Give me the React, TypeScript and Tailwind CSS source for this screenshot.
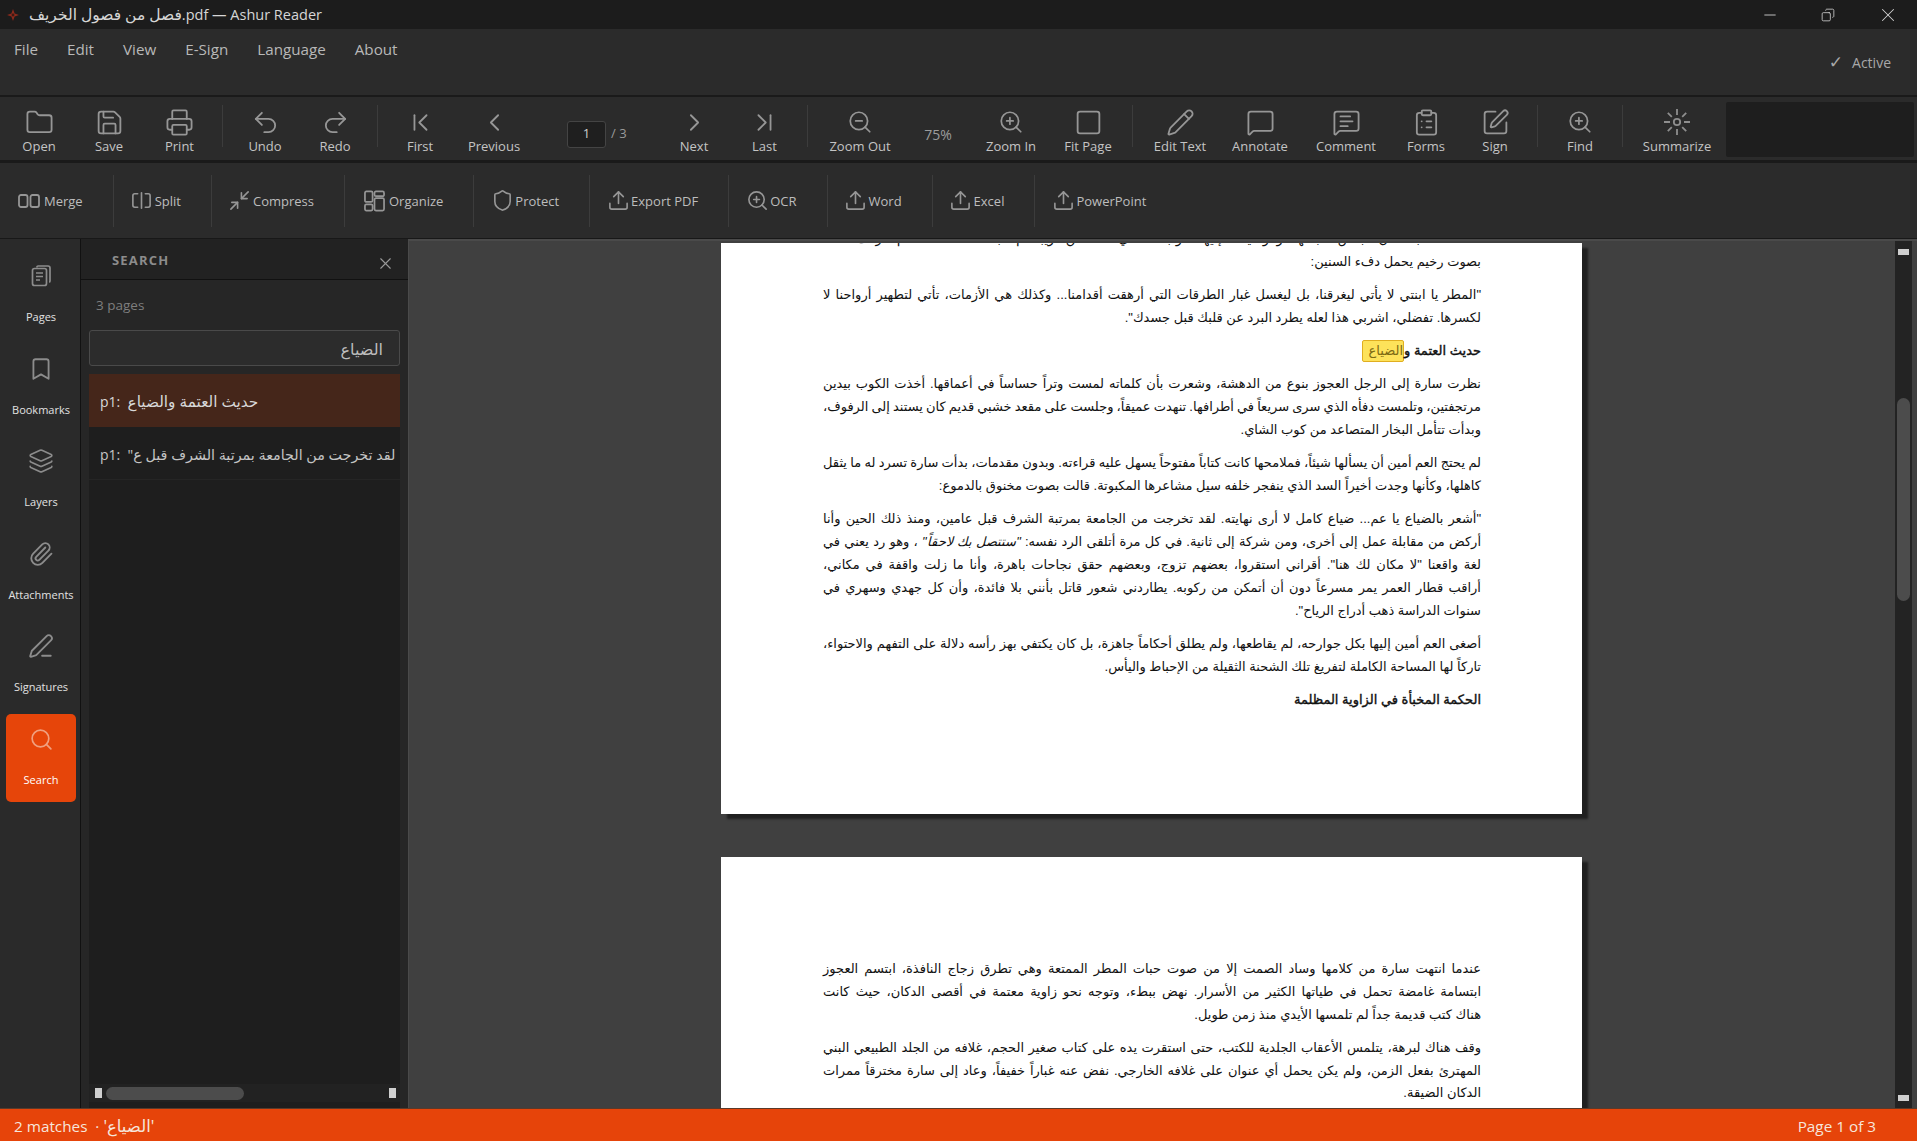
import { Fragment, type ReactNode } from 'react';
import {
  Bookmark, ChevronFirst, ChevronLast, ChevronLeft, ChevronRight, ClipboardList, Folder, Layers,
  MessageSquare, MessageSquareText, Minimize2, Minus, Paperclip, Pencil, PenLine, Printer, Redo2, Save,
  Search, Shield, Square, SquarePen, SquareSplitHorizontal, Undo2, Upload, X, ZoomIn, ZoomOut,
  Copy,
} from 'lucide-react';

const ui = 'font-["Open_Sans","DejaVu_Sans",sans-serif]';
const ic = 'h-[29px] w-[29px] text-[#969696]';
const icz = 'h-[26px] w-[26px] text-[#969696]';

function SummarizeIcon() {
  return (
    <svg viewBox="0 0 28 28" className="h-[28px] w-[28px] text-[#8e8e8e]" fill="none" stroke="currentColor" strokeWidth="1.8">
      <circle cx="14" cy="14" r="3.2" />
      <path d="M14 1v6M14 21v6M1 14h6M21 14h6M4.8 4.8l4 4M19.2 19.2l4 4M23.2 4.8l-4 4M8.8 19.2l-4 4" />
    </svg>
  );
}

type Tool = { label: string; w: string; icon: ReactNode } | null;

// main toolbar: null means a separator
const tools: Tool[] = [
  { label: 'Open', w: 'w-[70px]', icon: <Folder className={ic} strokeWidth={1.5} /> },
  { label: 'Save', w: 'w-[70px]', icon: <Save className={ic} strokeWidth={1.5} /> },
  { label: 'Print', w: 'w-[71px]', icon: <Printer className={ic} strokeWidth={1.5} /> },
  null,
  { label: 'Undo', w: 'w-[70px]', icon: <Undo2 className={ic} strokeWidth={1.5} /> },
  { label: 'Redo', w: 'w-[70px]', icon: <Redo2 className={ic} strokeWidth={1.5} /> },
  null,
  { label: 'First', w: 'w-[70px]', icon: <ChevronFirst className={ic} strokeWidth={1.5} /> },
  { label: 'Previous', w: 'w-[78px]', icon: <ChevronLeft className={ic} strokeWidth={1.5} /> },
];

const tools2: Tool[] = [
  { label: 'Next', w: 'w-[70px]', icon: <ChevronRight className={ic} strokeWidth={1.5} /> },
  { label: 'Last', w: 'w-[71px]', icon: <ChevronLast className={ic} strokeWidth={1.5} /> },
  null,
  { label: 'Zoom Out', w: 'w-[90px]', icon: <ZoomOut className={icz} strokeWidth={1.6} /> },
];

const tools3: Tool[] = [
  { label: 'Zoom In', w: 'w-[80px]', icon: <ZoomIn className={icz} strokeWidth={1.6} /> },
  { label: 'Fit Page', w: 'w-[74px]', icon: <Square className={ic} strokeWidth={1.5} /> },
  null,
  { label: 'Edit Text', w: 'w-[80px]', icon: <Pencil className={ic} strokeWidth={1.5} /> },
  { label: 'Annotate', w: 'w-[80px]', icon: <MessageSquare className={ic} strokeWidth={1.5} /> },
  { label: 'Comment', w: 'w-[92px]', icon: <MessageSquareText className={ic} strokeWidth={1.5} /> },
  { label: 'Forms', w: 'w-[68px]', icon: <ClipboardList className={ic} strokeWidth={1.5} /> },
  { label: 'Sign', w: 'w-[70px]', icon: <SquarePen className={ic} strokeWidth={1.5} /> },
  null,
  { label: 'Find', w: 'w-[70px]', icon: <ZoomIn className={icz} strokeWidth={1.6} /> },
  null,
  { label: 'Summarize', w: 'w-[94px]', icon: <SummarizeIcon /> },
];

const Sep = () => <div className="mx-[7px] mb-[5px] h-[42px] w-px shrink-0 self-center bg-[#3c3c3c]" />;

function ToolGroup({ items }: { items: Tool[] }) {
  return (
    <>
      {items.map((t, i) =>
        t ? (
          <div key={i} className={`${t.w} flex shrink-0 flex-col items-center pt-[11px]`}>
            <div className="flex h-[28px] items-center justify-center">{t.icon}</div>
            <span className="mt-[1px] text-[13px] leading-[18px] text-[#c4c4c4]">{t.label}</span>
          </div>
        ) : (
          <Sep key={i} />
        ),
      )}
    </>
  );
}

const small = 'h-[23px] w-[23px] -mx-[2.5px] text-[#969696]';

function MergeIcon() {
  return (
    <svg viewBox="0 0 22 22" className="h-[22px] w-[22px] text-[#969696]" fill="none" stroke="currentColor" strokeWidth="1.8">
      <rect x="1" y="5" width="8.5" height="12" rx="2" />
      <rect x="12.5" y="5" width="8.5" height="12" rx="2" />
    </svg>
  );
}

function OrganizeIcon() {
  return (
    <svg viewBox="0 0 22 22" className="h-[22px] w-[21px] text-[#969696]" fill="none" stroke="currentColor" strokeWidth="1.8">
      <rect x="1" y="1" width="8" height="11" rx="1.5" />
      <rect x="1" y="14.5" width="8" height="6.5" rx="1.5" />
      <rect x="11" y="1" width="10" height="5" rx="1.5" />
      <rect x="11" y="8" width="10" height="13" rx="1.5" />
    </svg>
  );
}

const actions = [
  { label: 'Merge', icon: <MergeIcon /> },
  { label: 'Split', icon: <SquareSplitHorizontal className={small} strokeWidth={1.7} /> },
  { label: 'Compress', icon: <Minimize2 className={small} strokeWidth={1.7} /> },
  { label: 'Organize', icon: <OrganizeIcon /> },
  { label: 'Protect', icon: <Shield className={small} strokeWidth={1.7} /> },
  { label: 'Export PDF', icon: <Upload className={small} strokeWidth={1.7} /> },
  { label: 'OCR', icon: <ZoomIn className={small} strokeWidth={1.7} /> },
  { label: 'Word', icon: <Upload className={small} strokeWidth={1.7} /> },
  { label: 'Excel', icon: <Upload className={small} strokeWidth={1.7} /> },
  { label: 'PowerPoint', icon: <Upload className={small} strokeWidth={1.7} /> },
];

function PagesIcon() {
  return (
    <svg viewBox="0 0 20 22" className="h-[22px] w-[20px] text-[#8c8c8c]" fill="none" stroke="currentColor" strokeWidth="1.7">
      <path d="M6 2.5V2a1 1 0 0 1 1-1h10a2 2 0 0 1 2 2v13a1 1 0 0 1-1 1" />
      <rect x="1.5" y="3.5" width="14" height="17" rx="2" />
      <path d="M5 8h7M5 11.5h7M5 15h4" />
    </svg>
  );
}

const railIc = 'h-[26px] w-[26px] text-[#8c8c8c]';
const rail = [
  { label: 'Pages', icon: <PagesIcon /> },
  { label: 'Bookmarks', icon: <Bookmark className={railIc} strokeWidth={1.7} /> },
  { label: 'Layers', icon: <Layers className={railIc} strokeWidth={1.5} /> },
  { label: 'Attachments', icon: <Paperclip className={railIc} strokeWidth={1.7} /> },
  { label: 'Signatures', icon: <PenLine className={railIc} strokeWidth={1.7} /> },
];

// one visual line of the pdf; last lines of a paragraph are not stretched
function L({ children, last, bold, tight }: { children: ReactNode; last?: boolean; bold?: boolean; tight?: boolean }) {
  return (
    <p
      dir="rtl"
      className={`h-[22.8px] whitespace-nowrap leading-[22.8px] ${last ? '[text-align-last:right] mb-[10.5px]' : '[text-align-last:justify]'} ${bold ? '[-webkit-text-stroke:0.4px_#111]' : ''} ${tight ? '[word-spacing:-0.6px]' : ''}`}
    >
      {children}
    </p>
  );
}

const pdfText = 'font-["Liberation_Sans","DejaVu_Sans",sans-serif] text-[13px] text-[#111]';

export default function App() {
  return (
    <div className={`flex h-[1141px] w-[1917px] flex-col overflow-hidden bg-[#2b2b2b] ${ui}`}>
      {/* title bar */}
      <div className="flex h-[29px] shrink-0 items-center bg-[#1c1c1c] pl-[7px] pr-[18px]">
        <svg viewBox="0 0 12 12" className="h-[12px] w-[12px] text-[#8c2a1c]" fill="currentColor">
          <path d="M6 0l1.6 4.4L12 6 7.6 7.6 6 12 4.4 7.6 0 6l4.4-1.6z" />
          <circle cx="6" cy="6" r="1.4" fill="#3a1a14" />
        </svg>
        <span className="ml-[10px] text-[14.5px] text-[#d6d6d6]"><span className="text-[15.5px]">فصل من فصول الخريف</span>.pdf — Ashur Reader</span>
        <div className="ml-auto flex items-center gap-[42px] text-[#d0d0d0]">
          <Minus className="h-[18px] w-[18px]" strokeWidth={1.2} />
          <Copy className="h-[14px] w-[14px] -scale-x-100" strokeWidth={1.4} />
          <X className="h-[22px] w-[22px]" strokeWidth={1.1} />
        </div>
      </div>

      {/* menu bar */}
      <div className="flex h-[68px] shrink-0 border-b-2 border-[#1a1a1a] bg-[#2b2b2b] pl-[14px] pr-[26px]">
        <div className="flex h-[40px] items-center gap-[29px] text-[15.2px] text-[#b8b8b8]">
          {['File', 'Edit', 'View', 'E-Sign', 'Language', 'About'].map((m) => (
            <span key={m}>{m}</span>
          ))}
        </div>
        <div className="ml-auto mt-[23px] flex h-[20px] items-center gap-[9px] text-[14px] text-[#a8a8a8]">
          <span className="text-[17px]">✓</span>
          <span>Active</span>
        </div>
      </div>

      {/* main toolbar */}
      <div className="flex h-[66px] shrink-0 border-b-[3px] border-[#1a1a1a] bg-[#2b2b2b] pl-[4px]">
        <ToolGroup items={tools} />
        <div className="flex w-[126px] shrink-0 items-center pl-[34px] pt-[11px]">
          <div className="flex h-[27px] w-[39px] items-center justify-center rounded-[3px] border border-[#444] bg-[#1f1f1f] text-[13px] text-[#cfcfcf]">1</div>
          <span className="ml-[5px] text-[13px] text-[#9a9a9a]">/ 3</span>
        </div>
        <ToolGroup items={tools2} />
        <div className="flex w-[66px] shrink-0 items-center justify-center pt-[11px] text-[14px] text-[#9c9c9c]">75%</div>
        <ToolGroup items={tools3} />
        <div className="ml-[2px] mt-[5px] h-[55px] w-[188px] shrink-0 rounded-[2px] bg-[#1e1e1e]" />
      </div>

      {/* actions toolbar */}
      <div className="flex h-[76px] shrink-0 items-center border-b border-[#181818] bg-[#2b2b2b] pl-[18px]">
        {actions.map((a, i) => (
          <Fragment key={a.label}>
            <div className={`flex items-center gap-[4px] pr-[30px] ${i === 0 ? '' : 'pl-[19px]'}`}>
              {a.icon}
              <span className="pt-[3px] text-[13px] text-[#bdbdbd]">{a.label}</span>
            </div>
            {i < actions.length - 1 && <div className="h-[52px] w-px bg-[#3c3c3c]" />}
          </Fragment>
        ))}
      </div>

      <div className="flex min-h-0 flex-1">
        {/* left rail */}
        <div className="flex w-[81px] shrink-0 flex-col border-r border-[#111] bg-[#2a2a2a]">
          <div className="pl-[2px] pt-[6px]">
            {rail.map((r) => (
              <div key={r.label} className="flex h-[92.5px] flex-col items-center pt-[18px]">
                <div className="flex h-[26px] items-center">{r.icon}</div>
                <span className="mt-[21px] text-[11px] leading-[14px] text-[#e2e2e2]">{r.label}</span>
              </div>
            ))}
          </div>
          <div className="ml-[6px] mt-[6px] flex h-[88px] w-[70px] flex-col items-center rounded-[5px] bg-[#e6450a] pt-[13px]">
            <Search className="h-[25px] w-[25px] text-[#f0a080]" strokeWidth={1.6} />
            <span className="mt-[21px] text-[11px] leading-[14px] text-white">Search</span>
          </div>
        </div>

        {/* search panel */}
        <div className="flex w-[327px] shrink-0 flex-col bg-[#262626]">
          <div className="flex h-[41px] shrink-0 items-start justify-between border-b border-[#111] bg-[#222] pl-[31px] pr-[13px]">
            <span className="mt-[12px] text-[13px] font-bold leading-[18px] tracking-[1.2px] text-[#8c8c8c]">SEARCH</span>
            <X className="mt-[15px] h-[19px] w-[19px] text-[#9a9a9a]" strokeWidth={1.4} />
          </div>
          <div className="mt-[15px] pl-[15px] text-[13.5px] leading-[20px] text-[#7e7e7e]">3 pages</div>
          <div className="ml-[8px] mt-[15px] flex h-[36px] w-[311px] shrink-0 items-center rounded-[3px] border border-[#4a4a4a] bg-[#2c2c2c] px-[16px] pt-[2px] text-[16px] text-[#bdbdbd]" dir="rtl">
            الضياع
          </div>
          <div className="ml-[8px] mt-[8px] flex min-h-0 w-[311px] flex-1 flex-col bg-[#1e1e1e]">
            <div className="flex h-[53px] shrink-0 items-center whitespace-pre bg-[#45261a] pl-[11px] pt-[1px] text-[14px] text-[#d8d8d8]">p1:  <span className="text-[15.3px]">حديث العتمة والضياع</span></div>
            <div className="flex h-[53px] shrink-0 items-center overflow-hidden whitespace-pre border-b border-[#252525] pl-[11px] pt-[3px] text-[14px] text-[#c4c4c4]">p1:  <span className="text-[14.3px]">"لقد تخرجت من الجامعة بمرتبة الشرف قبل ع</span></div>
            <div className="flex-1" />
            <div className="mb-[6px] flex h-[18px] shrink-0 items-center bg-[#222] pl-[6px] pr-[4px]">
              <div className="h-[10px] w-[7px] bg-[#cfcfcf]" />
              <div className="ml-[4px] h-[13px] w-[138px] rounded-full bg-[#4c4c4c]" />
              <div className="ml-auto h-[10px] w-[7px] bg-[#cfcfcf]" />
            </div>
          </div>
        </div>

        {/* document */}
        <div className="flex min-w-0 flex-1 overflow-hidden border-l border-t-2 border-[#4a4a4a] bg-[#404040]">
          <div className="min-w-0 flex-1 overflow-hidden pl-[312px] pt-[2px]">
            <div className={`h-[571px] w-[861px] overflow-hidden bg-white pl-[102px] pr-[101px] shadow-[6px_5px_2px_rgba(0,0,0,0.5)] ${pdfText}`}>
              <div className="-mt-[15px]">
                <L>قالت له بعد أن جلس قبالتها وهو يمد إليها كوب الشاي الساخن ويبتسم ابتسامة هادئة، ثم أردف قائلاً</L>
                <L last>بصوت رخيم يحمل دفء السنين:</L>
                <L>"المطر يا ابنتي لا يأتي ليغرقنا، بل ليغسل غبار الطرقات التي أرهقت أقدامنا... وكذلك هي الأزمات، تأتي لتطهير أرواحنا لا</L>
                <L last>لكسرها. تفضلي، اشربي هذا لعله يطرد البرد عن قلبك قبل جسدك".</L>
                <L last bold>
                  حديث العتمة و
                  <span className="inline-block h-[22px] w-[42px] rounded-[2px] border border-[#e0ae20] bg-[#fde25a] text-center leading-[20px] text-[#7c6a14] [-webkit-text-stroke:0]">الضياع</span>
                </L>
                <L>نظرت سارة إلى الرجل العجوز بنوع من الدهشة، وشعرت بأن كلماته لمست وتراً حساساً في أعماقها. أخذت الكوب بيدين</L>
                <L tight>مرتجفتين، وتلمست دفأه الذي سرى سريعاً في أطرافها. تنهدت عميقاً، وجلست على مقعد خشبي قديم كان يستند إلى الرفوف،</L>
                <L last>وبدأت تتأمل البخار المتصاعد من كوب الشاي.</L>
                <L tight>لم يحتج العم أمين أن يسألها شيئاً، فملامحها كانت كتاباً مفتوحاً يسهل عليه قراءته. وبدون مقدمات، بدأت سارة تسرد له ما يثقل</L>
                <L last>كاهلها، وكأنها وجدت أخيراً السد الذي ينفجر خلفه سيل مشاعرها المكبوتة. قالت بصوت مخنوق بالدموع:</L>
                <L>"أشعر بالضياع يا عم... ضياع كامل لا أرى نهايته. لقد تخرجت من الجامعة بمرتبة الشرف قبل عامين، ومنذ ذلك الحين وأنا</L>
                <L>أركض من مقابلة عمل إلى أخرى، ومن شركة إلى ثانية. في كل مرة أتلقى الرد نفسه: <i>"ستتصل بك لاحقاً"</i> ، وهو رد يعني في</L>
                <L>لغة واقعنا "لا مكان لك هنا". أقراني استقروا، بعضهم تزوج، وبعضهم حقق نجاحات باهرة، وأنا ما زلت واقفة في مكاني،</L>
                <L>أراقب قطار العمر يمر مسرعاً دون أن أتمكن من ركوبه. يطاردني شعور قاتل بأنني بلا فائدة، وأن كل جهدي وسهري في</L>
                <L last>سنوات الدراسة ذهب أدراج الرياح".</L>
                <L>أصغى العم أمين إليها بكل جوارحه، لم يقاطعها، ولم يطلق أحكاماً جاهزة، بل كان يكتفي بهز رأسه دلالة على التفهم والاحتواء،</L>
                <L last>تاركاً لها المساحة الكاملة لتفريغ تلك الشحنة الثقيلة من الإحباط واليأس.</L>
                <L last bold>الحكمة المخبأة في الزاوية المظلمة</L>
              </div>
            </div>
            <div className={`mt-[43px] h-[500px] w-[861px] bg-white pl-[102px] pr-[101px] pt-[101px] shadow-[6px_5px_2px_rgba(0,0,0,0.5)] ${pdfText}`}>
              <L>عندما انتهت سارة من كلامها وساد الصمت إلا من صوت حبات المطر الممتعة وهي تطرق زجاج النافذة، ابتسم العجوز</L>
              <L>ابتسامة غامضة تحمل في طياتها الكثير من الأسرار. نهض ببطء، وتوجه نحو زاوية معتمة في أقصى الدكان، حيث كانت</L>
              <L last>هناك كتب قديمة جداً لم تلمسها الأيدي منذ زمن طويل.</L>
              <L>وقف هناك لبرهة، يتلمس الأعقاب الجلدية للكتب، حتى استقرت يده على كتاب صغير الحجم، غلافه من الجلد الطبيعي البني</L>
              <L>المهترئ بفعل الزمن، ولم يكن يحمل أي عنوان على غلافه الخارجي. نفض عنه غباراً خفيفاً، وعاد إلى سارة مخترقاً ممرات</L>
              <L last>الدكان الضيقة.</L>
            </div>
          </div>
          {/* vertical scrollbar */}
          <div className="mr-[5px] flex w-[17px] shrink-0 flex-col items-center bg-[#232323]">
            <div className="mt-[8px] h-[6px] w-[11px] bg-[#cfcfcf]" />
            <div className="mt-[143px] h-[203px] w-[13px] rounded-full bg-[#4c4c4c]" />
            <div className="mb-[7px] mt-auto h-[6px] w-[11px] bg-[#cfcfcf]" />
          </div>
        </div>
      </div>

      {/* status bar */}
      <div className="flex h-[33px] shrink-0 items-center justify-between border-t border-[#5a3a2a] bg-[#e6440a] pl-[14px] pr-[41px] pt-[2px] text-[15.3px] text-[#f6e6dc]">
        <span className="whitespace-pre">2 matches  · <span className="text-[16.5px]">'الضياع'</span></span>
        <span>Page 1 of 3</span>
      </div>
    </div>
  );
}
